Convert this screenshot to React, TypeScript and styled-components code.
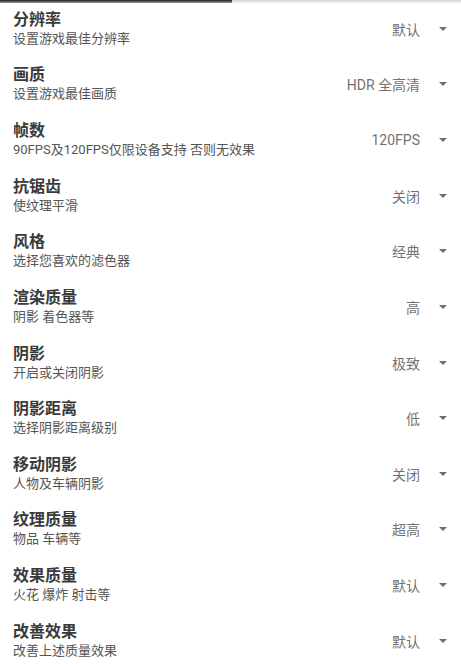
import styled, { createGlobalStyle } from 'styled-components';

const GlobalStyle = createGlobalStyle`
  html, body {
    margin: 0;
    padding: 0;
    background: #ffffff;
  }
  body {
    font-family: Roboto, "Noto Sans CJK SC", sans-serif;
  }
`;

const Page = styled.div`
  position: relative;
  width: 461px;
  height: 664px;
  overflow: hidden;
  background: #ffffff;
`;

const ScrollTrack = styled.div`
  position: absolute;
  top: 0;
  left: 0;
  right: 0;
  height: 3px;
  background: linear-gradient(#d4d4d4, #f2f2f2);
`;

const ScrollThumb = styled.div`
  width: 232px;
  height: 100%;
  background: linear-gradient(#1e1e1e, #9a9a9a);
`;

const List = styled.div`
  display: flex;
  flex-direction: column;
  padding-top: 1px;
`;

const Row = styled.div`
  display: flex;
  align-items: center;
  height: 55.64px;
  padding: 0 14px 0 13px;
  box-sizing: border-box;
`;

const Texts = styled.div`
  display: flex;
  flex-direction: column;
  flex: 1;
  min-width: 0;
`;

const Title = styled.div`
  font-size: 16px;
  line-height: 20px;
  font-weight: 700;
  color: #3a3a3a;
`;

const Subtitle = styled.div`
  font-size: 13px;
  line-height: 18px;
  color: #555555;
  white-space: nowrap;
`;

const Select = styled.div`
  display: flex;
  align-items: center;
  gap: 19px;
`;

const Value = styled.span`
  font-size: 14px;
  color: #727272;
  white-space: nowrap;
`;

const Caret = styled.span`
  width: 0;
  height: 0;
  border-left: 4.5px solid transparent;
  border-right: 4.5px solid transparent;
  border-top: 4.5px solid #6e6e6e;
`;

interface Setting {
  title: string;
  desc: string;
  value: string;
}

const settings: Setting[] = [
  { title: '分辨率', desc: '设置游戏最佳分辨率', value: '默认' },
  { title: '画质', desc: '设置游戏最佳画质', value: 'HDR 全高清' },
  { title: '帧数', desc: '90FPS及120FPS仅限设备支持 否则无效果', value: '120FPS' },
  { title: '抗锯齿', desc: '使纹理平滑', value: '关闭' },
  { title: '风格', desc: '选择您喜欢的滤色器', value: '经典' },
  { title: '渲染质量', desc: '阴影 着色器等', value: '高' },
  { title: '阴影', desc: '开启或关闭阴影', value: '极致' },
  { title: '阴影距离', desc: '选择阴影距离级别', value: '低' },
  { title: '移动阴影', desc: '人物及车辆阴影', value: '关闭' },
  { title: '纹理质量', desc: '物品 车辆等', value: '超高' },
  { title: '效果质量', desc: '火花 爆炸 射击等', value: '默认' },
  { title: '改善效果', desc: '改善上述质量效果', value: '默认' },
];

const App = () => {
  return (
    <Page>
      <GlobalStyle />
      <List>
        {settings.map((s) => (
          <Row key={s.title}>
            <Texts>
              <Title>{s.title}</Title>
              <Subtitle>{s.desc}</Subtitle>
            </Texts>
            <Select>
              <Value>{s.value}</Value>
              <Caret />
            </Select>
          </Row>
        ))}
      </List>
      <ScrollTrack>
        <ScrollThumb />
      </ScrollTrack>
    </Page>
  );
};

export default App;
